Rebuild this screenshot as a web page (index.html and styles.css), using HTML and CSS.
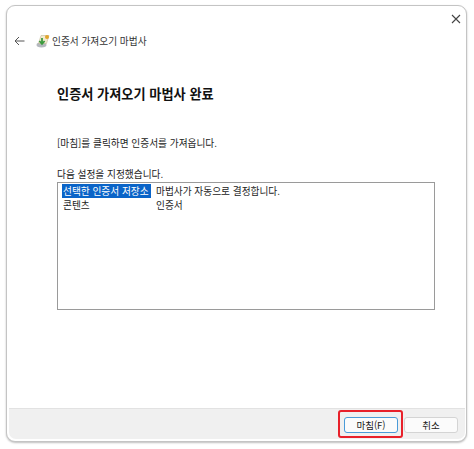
FILE: index.html
```html
<!DOCTYPE html>
<html lang="ko">
  <head>
    <meta charset="UTF-8" />
    <title>인증서 가져오기 마법사</title>
    <link rel="stylesheet" href="styles.css">
  </head>
  <body>
    <div class="window">
      <div class="title-bar">
        <svg class="close-icon" width="10" height="10" viewBox="0 0 10 10">
          <path d="M1 1 L9 9 M9 1 L1 9" stroke="#444" stroke-width="1.1" fill="none" />
        </svg>
      </div>
      <div class="nav-row">
        <svg class="back-icon" width="11" height="10" viewBox="0 0 11 10">
          <path d="M10.5 5 H1 M5 1 L1 5 L5 9" stroke="#555" stroke-width="1" fill="none" />
        </svg>
        <svg class="wizard-icon" width="14" height="14" viewBox="0 0 14 14">
          <ellipse cx="5.5" cy="11" rx="5" ry="2.4" fill="#b4b8be" />
          <path d="M5 1.5 H13 L10.5 9.5 H2.5 Z" fill="#f1ead0" stroke="#b8ad84" stroke-width="0.5" />
          <path d="M6 4 V9 M3.4 7 L6 10 L8.6 7" stroke="#3a9a3e" stroke-width="1.8" fill="none" />
          <circle cx="11" cy="3" r="2" fill="#e2a52c" />
        </svg>
        <span class="nav-title">인증서 가져오기 마법사</span>
      </div>
      <div class="content">
        <h1>인증서 가져오기 마법사 완료</h1>
        <p class="intro">[마침]를 클릭하면 인증서를 가져옵니다.</p>
        <p class="list-label">다음 설정을 지정했습니다.</p>
        <div class="list-box">
          <div class="list-row">
            <span class="col-name selected">선택한 인증서 저장소</span>
            <span class="col-value">마법사가 자동으로 결정합니다.</span>
          </div>
          <div class="list-row">
            <span class="col-name">콘텐츠</span>
            <span class="col-value">인증서</span>
          </div>
        </div>
      </div>
      <div class="footer">
        <div class="btn-wrap">
          <button class="btn primary">마침(F)</button>
          <div class="highlight"></div>
        </div>
        <button class="btn">취소</button>
      </div>
    </div>
  </body>
</html>
```

FILE: styles.css
```css
html, body {
  height: 100%;
}
body {
  margin: 0;
  padding: 5px 7px 7px 6px;
  box-sizing: border-box;
  background-color: #fff;
  font-family: "Noto Sans CJK KR", "Noto Sans", sans-serif;
  font-size: 9.7px;
  color: #222;
  overflow: hidden;
}
.window {
  height: 100%;
  box-sizing: border-box;
  display: flex;
  flex-direction: column;
  background-color: #fff;
  border: 1px solid #c4c4c4;
  border-radius: 9px;
  box-shadow: 0 1px 2px rgba(0, 0, 0, 0.25);
  padding: 0 1px 2px 2px;
}
.title-bar {
  height: 25px;
  display: flex;
  justify-content: flex-end;
  align-items: center;
  padding: 1px 4px 0 0;
  box-sizing: border-box;
}
.nav-row {
  height: 20px;
  display: flex;
  align-items: center;
  padding-left: 5px;
}
.wizard-icon {
  margin-left: 11px;
}
.nav-title {
  margin-left: 2px;
  font-size: 9.7px;
  color: #333;
}
.content {
  flex: 1;
  padding: 0 30px 0 48px;
}
h1 {
  margin: 35px 0 0;
  font-size: 13.2px;
  line-height: 16px;
  font-weight: 700;
  color: #111;
}
.intro {
  margin: 34px 0 0;
  line-height: 14px;
}
.list-label {
  margin: 17px 0 0;
  line-height: 14px;
}
.list-box {
  margin-top: 1px;
  height: 128px;
  box-sizing: border-box;
  border: 1px solid #9a9a9a;
  padding: 1px 4px;
}
.list-row {
  display: flex;
  height: 14px;
  line-height: 14px;
}
.col-name {
  width: 94px;
  flex: none;
  padding-left: 1px;
  box-sizing: border-box;
  white-space: nowrap;
}
.col-name.selected {
  width: 89px;
  margin-right: 5px;
  background-color: #0a64c8;
  color: #fff;
}
.footer {
  height: 31px;
  flex: none;
  box-sizing: border-box;
  background-color: #f0f0f0;
  border-top: 1px solid #e2e2e2;
  border-radius: 0 0 7px 7px;
  display: flex;
  justify-content: flex-end;
  align-items: center;
  gap: 6px;
  padding: 2px 7px 0 0;
}
.btn-wrap {
  position: relative;
  display: flex;
}
.btn {
  width: 54px;
  height: 16px;
  padding: 0;
  font-family: inherit;
  font-size: 9.5px;
  line-height: 14px;
  color: #222;
  background-color: #fbfbfb;
  border: 1px solid #d4d4d4;
  border-radius: 3px;
}
.btn.primary {
  border: 1px solid #4a9bd8;
}
.highlight {
  position: absolute;
  left: -6px;
  top: -7px;
  width: 65px;
  height: 28px;
  box-sizing: border-box;
  border: 2px solid #e8202a;
  border-radius: 3px;
}
```
